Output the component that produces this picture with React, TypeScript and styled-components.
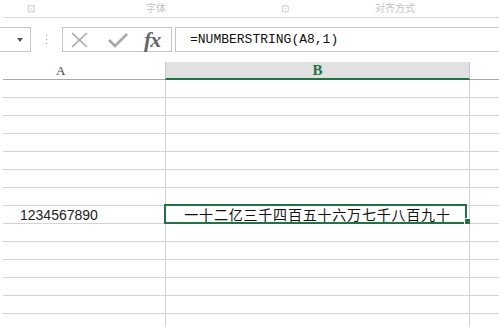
import { Fragment } from "react";
import styled, { createGlobalStyle } from "styled-components";

const GlobalStyle = createGlobalStyle`
  html, body {
    margin: 0;
    padding: 0;
    background: #fff;
    overflow: hidden;
  }
  body {
    font-family: "Liberation Sans", Arial, sans-serif;
  }
`;

const StyledPage = styled.div`
  width: 499px;
  height: 327px;
  overflow: hidden;
  display: flex;
  flex-direction: column;

  & > * {
    flex-shrink: 0;
  }
`;

const StyledRibbon = styled.div`
  height: 17px;
  margin-left: 3px;
  border-bottom: 1px solid #d8d8d8;
  position: relative;
  font-family: "Noto Sans CJK SC", sans-serif;
  font-size: 10px;
  color: #b4b4b4;
`;

const StyledGroupLabel = styled.span<{ $left: number }>`
  position: absolute;
  top: 2px;
  left: ${(p) => p.$left}px;
  line-height: 12px;
  opacity: 0.8;
`;

const StyledFormulaBar = styled.div`
  display: flex;
  align-items: stretch;
  height: 25px;
  margin-top: 9px;
`;

const StyledNameBox = styled.div`
  width: 31px;
  border: 1px solid #c6c6c6;
  border-left: none;
  display: flex;
  align-items: center;
  justify-content: flex-end;
  padding-right: 7px;
  box-sizing: border-box;
`;

const StyledArrow = styled.div`
  width: 0;
  height: 0;
  border-left: 3px solid transparent;
  border-right: 3px solid transparent;
  border-top: 4px solid #555;
`;

const StyledDots = styled.div`
  width: 31px;
  display: flex;
  flex-direction: column;
  align-items: center;
  justify-content: center;
  gap: 3px;

  span {
    width: 1px;
    height: 1px;
    background: #9a9a9a;
  }
`;

const StyledButtons = styled.div`
  width: 110px;
  box-sizing: border-box;
  border: 1px solid #c6c6c6;
  display: flex;
  align-items: center;
  padding-left: 7px;
  gap: 18px;
`;

const StyledFx = styled.span`
  font-family: "Liberation Serif", serif;
  font-style: italic;
  font-weight: bold;
  font-size: 22px;
  color: #666;
  margin-left: -2px;
  letter-spacing: -1px;
  line-height: 20px;
`;

const StyledFormulaInput = styled.div`
  flex: 1;
  margin-left: 3px;
  margin-right: -4px;
  border: 1px solid #c6c6c6;
  display: flex;
  align-items: center;
  padding-left: 14px;
  font-family: "Liberation Mono", monospace;
  font-size: 13px;
  color: #111;
`;

const StyledGrid = styled.div`
  margin-top: 10px;
  margin-left: 3px;
  display: grid;
  grid-template-columns: 163px 304px 1fr;
  grid-auto-rows: 18px;
`;

const StyledHeader = styled.div<{ $active?: boolean }>`
  box-sizing: border-box;
  height: 18px;
  font-family: "Liberation Serif", serif;
  line-height: 17px;
  background: ${(p) => (p.$active ? "#e1e1e1" : "#fff")};
  color: ${(p) => (p.$active ? "#217346" : "#444")};
  font-weight: ${(p) => (p.$active ? "bold" : "normal")};
  font-size: ${(p) => (p.$active ? "15px" : "13px")};
  border-bottom: ${(p) => (p.$active ? "2px solid #217346" : "1px solid #a9a9a9")};
  border-right: ${(p) => (p.$active ? "1px solid #c8c8c8" : "none")};
  border-left: ${(p) => (p.$active ? "1px solid #c8c8c8" : "none")};
  margin-left: ${(p) => (p.$active ? "-1px" : "0")};
  text-align: ${(p) => (p.$active ? "center" : "left")};
  padding-left: ${(p) => (p.$active ? "0" : "53px")};
`;

const StyledCell = styled.div<{ $divider?: boolean }>`
  position: relative;
  box-sizing: border-box;
  border-bottom: 1px solid #d4d4d4;
  border-right: ${(p) => (p.$divider ? "1px solid #d4d4d4" : "none")};
  line-height: 17px;
`;

const StyledNumber = styled.span`
  padding-left: 17px;
  font-family: "Liberation Sans", Arial, sans-serif;
  font-size: 14px;
  color: #222;
`;

const StyledChinese = styled.div`
  text-align: center;
  font-family: "Noto Sans CJK SC", sans-serif;
  font-size: 14px;
  letter-spacing: 0.8px;
  color: #111;
`;

const StyledSelection = styled.div`
  position: absolute;
  top: -2px;
  left: -2px;
  right: 2px;
  bottom: -1px;
  border: 2px solid #217346;
  pointer-events: none;
`;

const StyledHandle = styled.div`
  position: absolute;
  right: -5px;
  bottom: -2px;
  width: 6px;
  height: 6px;
  background: #217346;
  border-top: 1px solid #fff;
  border-left: 1px solid #fff;
  box-sizing: border-box;
`;

const CancelIcon = () => (
  <svg width="20" height="16" viewBox="0 0 20 16">
    <path d="M2 1 L17 15 M17 1 L2 15" stroke="#a8a8a8" strokeWidth="1.6" fill="none" />
  </svg>
);

const CheckIcon = () => (
  <svg width="20" height="16" viewBox="0 0 20 16">
    <path d="M1 8 L7 14 L19 2" stroke="#a8a8a8" strokeWidth="2.6" fill="none" />
  </svg>
);

const ROWS = 14;
const SELECTED = 7;

const App = () => {
  return (
    <StyledPage>
      <GlobalStyle />
      <StyledRibbon>
        <StyledGroupLabel $left={24}>⊡</StyledGroupLabel>
        <StyledGroupLabel $left={143}>字体</StyledGroupLabel>
        <StyledGroupLabel $left={278}>⊡</StyledGroupLabel>
        <StyledGroupLabel $left={372}>对齐方式</StyledGroupLabel>
      </StyledRibbon>
      <StyledFormulaBar>
        <StyledNameBox>
          <StyledArrow />
        </StyledNameBox>
        <StyledDots>
          <span />
          <span />
          <span />
        </StyledDots>
        <StyledButtons>
          <CancelIcon />
          <CheckIcon />
          <StyledFx>fx</StyledFx>
        </StyledButtons>
        <StyledFormulaInput>=NUMBERSTRING(A8,1)</StyledFormulaInput>
      </StyledFormulaBar>
      <StyledGrid>
        <StyledHeader>A</StyledHeader>
        <StyledHeader $active>B</StyledHeader>
        <StyledHeader />
        {Array.from({ length: ROWS }).map((_, i) => (
          <Fragment key={i}>
            <StyledCell $divider>
              {i === SELECTED && <StyledNumber>1234567890</StyledNumber>}
            </StyledCell>
            <StyledCell $divider>
              {i === SELECTED && (
                <>
                  <StyledChinese>一十二亿三千四百五十六万七千八百九十</StyledChinese>
                  <StyledSelection>
                    <StyledHandle />
                  </StyledSelection>
                </>
              )}
            </StyledCell>
            <StyledCell />
          </Fragment>
        ))}
      </StyledGrid>
    </StyledPage>
  );
};

export default App;
